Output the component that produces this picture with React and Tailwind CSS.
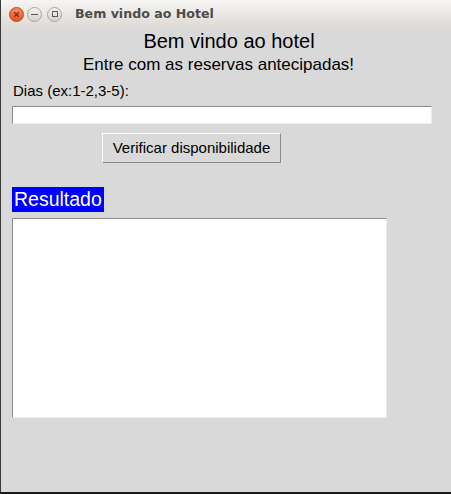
export default function App() {
  return (
    <div className="w-[451px] h-[494px] flex flex-col bg-[#d9d9d9] overflow-hidden" style={{ fontFamily: '"Liberation Sans", Arial, sans-serif' }}>
      <div className="flex flex-1 min-h-0">
        <div className="w-px bg-[#3a3a3a]" />
        <div className="flex-1 flex flex-col min-w-0">
          {/* Title bar */}
          <div className="h-[28px] flex items-center bg-gradient-to-b from-[#f6f5f3] to-[#dedad5] shrink-0">
            <div className="ml-[8px] w-[15px] h-[15px] rounded-full bg-gradient-to-b from-[#f7875f] to-[#e3501f] border border-[#b8451e] flex items-center justify-center">
              <svg width="7" height="7" viewBox="0 0 8 8"><path d="M1.5 1.5 L6.5 6.5 M6.5 1.5 L1.5 6.5" stroke="#5a2410" strokeWidth="1.3" /></svg>
            </div>
            <div className="ml-[3px] w-[15px] h-[15px] rounded-full bg-gradient-to-b from-[#f4f3f1] to-[#d6d3ce] border border-[#a8a49e] flex items-center justify-center">
              <div className="w-[7px] h-px bg-[#5a5a5a]" />
            </div>
            <div className="ml-[5px] w-[15px] h-[15px] rounded-full bg-gradient-to-b from-[#f4f3f1] to-[#d6d3ce] border border-[#a8a49e] flex items-center justify-center">
              <div className="w-[6px] h-[6px] border border-[#5a5a5a]" />
            </div>
            <div className="ml-[13px] text-[12.6px] font-bold text-[#4c4c4c]" style={{ fontFamily: '"DejaVu Sans", sans-serif' }}>Bem vindo ao Hotel</div>
          </div>
          {/* Content */}
          <div className="flex-1 flex flex-col pl-[11px] pr-[19px]">
            <div className="text-center text-[20px] leading-[22px] text-black mt-[2px] pl-[14px]">Bem vindo ao hotel</div>
            <div className="text-center text-[17px] leading-[19px] text-black mt-[3px] pr-[7px]">Entre com as reservas antecipadas!</div>
            <div className="text-[15px] leading-[17px] text-black mt-[8px] ml-[1px]">Dias (ex:1-2,3-5):</div>
            <div className="mt-[7px] h-[18px] bg-white border-t border-l border-[#8c8c8c] border-b-[#ececec] border-r-[#ececec] border-b border-r" />
            <div className="mt-[9px] ml-[90px] w-[179px] h-[30px] flex items-center justify-center text-[15px] text-black bg-[#d9d9d9] border border-t-white border-l-white border-b-[#8c8c8c] border-r-[#8c8c8c]">
              Verificar disponibilidade
            </div>
            <div className="mt-[24px] self-start h-[25px] px-[2px] bg-[#0000ff] text-white text-[19.5px] leading-[25px]">Resultado</div>
            <div className="mt-[6px] w-[375px] h-[200px] bg-white border-t border-l border-[#8c8c8c] border-b-[#ececec] border-r-[#ececec] border-b border-r" />
          </div>
        </div>
      </div>
      <div className="h-[2px] bg-[#1a1a1a] shrink-0" />
    </div>
  );
}
